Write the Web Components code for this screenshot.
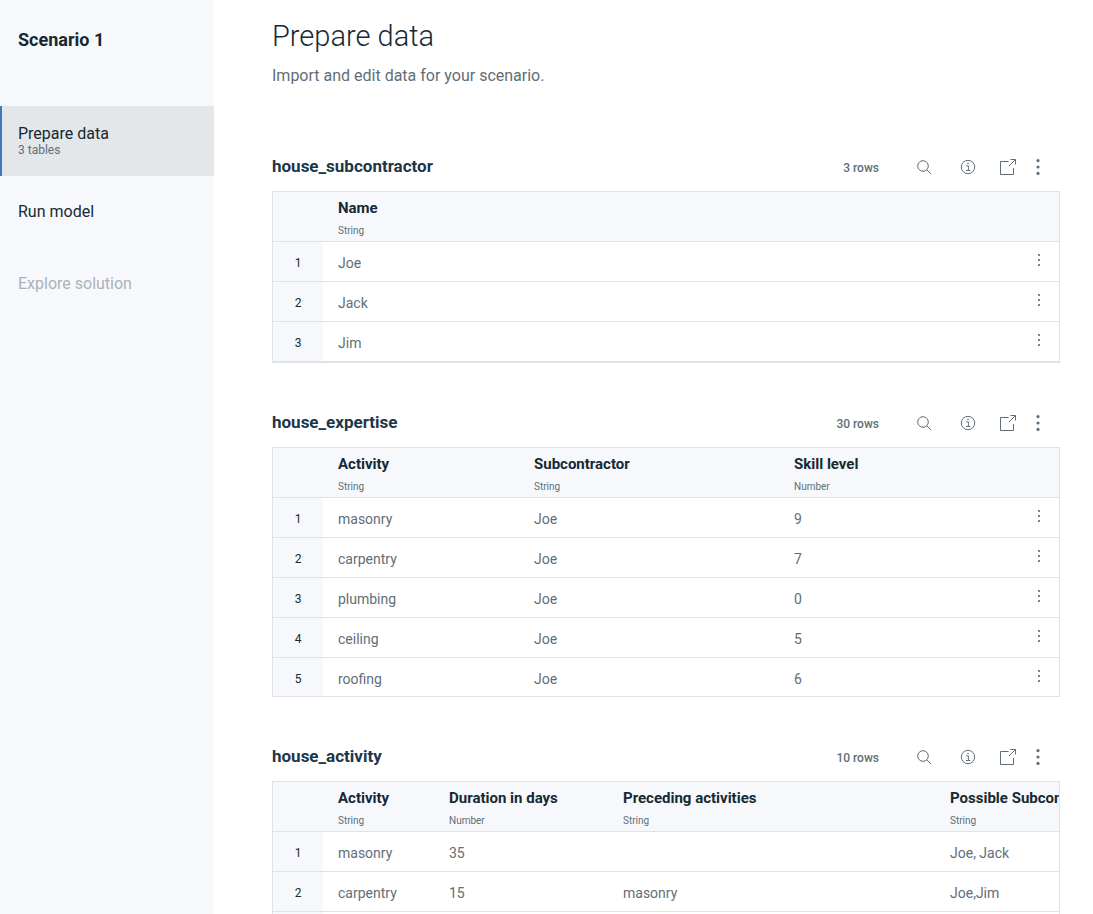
<!DOCTYPE html>
<html lang="en">
<head>
<meta charset="utf-8">
<meta name="viewport" content="width=device-width, initial-scale=1">
<title>Scenario 1 - Prepare data</title>
<style>
  html, body { margin: 0; height: 100%; }
  body {
    font-family: Roboto, "Liberation Sans", sans-serif;
    --ink: #152934; --muted: #5f6e78; --title: #1d3649;
    --line: #dfe3e6; --panel: #f7f8fc; --active: #e3e7ea; --accent: #4178be; --off: #a9b3b8;
    color: var(--ink);
  }
</style>
</head>
<body>
<scenario-app>
  <scenario-nav slot="nav" heading="Scenario 1">
    <nav-item href="#prepare" active note="3 tables">Prepare data</nav-item>
    <nav-item href="#run">Run model</nav-item>
    <nav-item href="#explore" disabled>Explore solution</nav-item>
  </scenario-nav>
  <page-header heading="Prepare data">Import and edit data for your scenario.</page-header>
  <data-table name="house_subcontractor"></data-table>
  <data-table name="house_expertise"></data-table>
  <data-table name="house_activity"></data-table>
</scenario-app>

<script>
const TABLES = {
  house_subcontractor: {
    count: 3, menu: true,
    columns: [["Name", "String"]],
    rows: [["Joe"], ["Jack"], ["Jim"]]
  },
  house_expertise: {
    count: 30, menu: true,
    columns: [["Activity", "String", 196], ["Subcontractor", "String", 260], ["Skill level", "Number"]],
    rows: [["masonry", "Joe", "9"], ["carpentry", "Joe", "7"], ["plumbing", "Joe", "0"],
           ["ceiling", "Joe", "5"], ["roofing", "Joe", "6"]]
  },
  house_activity: {
    count: 10, menu: false, width: 900,
    columns: [["Activity", "String", 111], ["Duration in days", "Number", 174],
              ["Preceding activities", "String", 327], ["Possible Subcontractors", "String"]],
    rows: [["masonry", "35", "", "Joe, Jack"], ["carpentry", "15", "masonry", "Joe,Jim"], ["", "", "", ""]]
  }
};

function mount(el, html) {
  el.attachShadow({ mode: "open" }).innerHTML = html;
}

customElements.define("scenario-app", class extends HTMLElement {
  connectedCallback() {
    mount(this, `
      <style>
        :host { display: grid; grid-template-columns: 214px minmax(0, 1fr); height: 100vh; }
        main { overflow: hidden auto; scrollbar-width: none; padding: 16px 33px 0 58px; }
      </style>
      <slot name="nav"></slot>
      <main><slot></slot></main>`);
  }
});

customElements.define("scenario-nav", class extends HTMLElement {
  connectedCallback() {
    mount(this, `
      <style>
        :host { display: block; background: var(--panel); }
        h2 { margin: 0; padding: 28px 18px 54px; font-size: 18px; line-height: 24px; font-weight: 700; }
      </style>
      <h2>${this.getAttribute("heading")}</h2>
      <nav><slot></slot></nav>`);
  }
});

customElements.define("nav-item", class extends HTMLElement {
  connectedCallback() {
    const note = this.getAttribute("note");
    const off = this.hasAttribute("disabled");
    mount(this, `
      <style>
        :host { display: block; }
        a { display: flex; flex-direction: column; justify-content: center; height: 72px;
            padding: 0 16px; border-left: 2px solid transparent; color: inherit;
            text-decoration: none; font-size: 16px; line-height: 18px; }
        small { font-size: 12px; line-height: 14px; color: var(--muted); }
        :host([active]) a { height: 70px; background: var(--active); border-color: var(--accent); }
        :host([disabled]) a { color: var(--off); }
      </style>
      <a href="${this.getAttribute("href")}" ${off ? 'aria-disabled="true"' : ""}>
        <span><slot></slot></span>${note ? `<small>${note}</small>` : ""}
      </a>`);
  }
});

customElements.define("page-header", class extends HTMLElement {
  connectedCallback() {
    mount(this, `
      <style>
        :host { display: block; margin-bottom: 59px; }
        h1 { margin: 0 0 8px; font-size: 29px; line-height: 40px; font-weight: 300; }
        p { margin: 0; font-size: 16px; line-height: 24px; color: var(--muted); }
      </style>
      <h1>${this.getAttribute("heading")}</h1>
      <p><slot></slot></p>`);
  }
});

customElements.define("tool-button", class extends HTMLElement {
  connectedCallback() {
    const icons = {
      search: `<circle cx="7" cy="7" r="5.3"/><path d="M10.8 10.8L15 15"/>`,
      info: `<circle cx="8" cy="8" r="6.7"/><path d="M6.3 6.8H8.4V11.4M5.9 11.5H10.4"/><circle cx="8" cy="4.6" r=".4"/>`,
      open: `<path d="M8.5 2.5H.5V15.5H13.5V9M10.5.5H15.5V5.5M15.5.5L9 7"/>`,
      menu: `<g fill="currentColor" stroke="none"><circle cx="8" cy="1.6" r="1.6"/><circle cx="8" cy="8" r="1.6"/><circle cx="8" cy="14.4" r="1.6"/></g>`,
      row: `<g fill="currentColor" stroke="none"><path d="M7 2h2v2H7zM7 7h2v2H7zM7 12h2v2H7z"/></g>`
    };
    mount(this, `
      <style>
        :host { display: block; width: 44px; color: var(--muted); }
        :host([narrow]) { width: 36px; }
        :host([icon="menu"]) { width: 24px; }
        :host([icon="row"]) { width: 40px; opacity: .85; }
        button { display: flex; align-items: center; justify-content: center; width: 100%;
                 height: 40px; padding: 0; border: 0; background: none; color: inherit; }
        :host([icon="row"]) button { height: 36px; }
        svg { width: 16px; height: 16px; fill: none; stroke: currentColor; overflow: visible; }
      </style>
      <button type="button" aria-label="${this.getAttribute("label")}">
        <svg viewBox="0 0 16 16" aria-hidden="true">${icons[this.getAttribute("icon")]}</svg>
      </button>`);
  }
});

customElements.define("data-table", class extends HTMLElement {
  connectedCallback() {
    const name = this.getAttribute("name");
    const t = TABLES[name];
    const cols = t.columns.map(c => `<col${c[2] ? ` style="width:${c[2]}px"` : ""}>`).join("");
    const heads = t.columns.map(c => `<th scope="col">${c[0]}<small>${c[1]}</small></th>`).join("");
    const body = t.rows.map((r, i) => `<tr><th scope="row">${r[0] ? i + 1 : ""}</th>${r.map(v => `<td>${v}</td>`).join("")}${
      t.menu ? `<td class="menu"><tool-button icon="row" label="Row ${i + 1} menu"></tool-button></td>` : ""}</tr>`).join("");
    mount(this, `
      <style>
        :host { display: block; margin-bottom: 40px; }
        header { display: flex; align-items: center; height: 40px; margin-bottom: 4px; padding-right: 10px; }
        h2 { flex: 1; margin: 0; padding-bottom: 2px; font-size: 17px; line-height: 20px; font-weight: 700; color: var(--title); }
        .count { margin-right: 23px; padding-top: 2px; font-size: 12px; line-height: 16px; font-weight: 500; color: var(--muted); }
        .frame { border: 1px solid var(--line); box-sizing: border-box; max-height: 250px;
                 overflow: auto; scrollbar-width: none; }
        table { width: 100%; min-width: ${t.width || 0}px; table-layout: fixed; border-collapse: separate; border-spacing: 0; }
        .num { width: 50px; } .act { width: 40px; }
        th, td { box-sizing: border-box; padding: 0 0 0 15px; text-align: left; font-size: 14px;
                 border-bottom: 1px solid var(--line); white-space: nowrap; }
        thead th { height: 50px; padding-top: 4px; font-size: 15px; line-height: 20px; background: var(--panel); }
        small { display: block; padding-top: 4px; font-size: 10px; line-height: 18px; font-weight: 400; color: var(--muted); }
        tbody th { padding: 2px 0 0; text-align: center; font-size: 12px; font-weight: 400; background: var(--panel); }
        td { height: 40px; padding-top: 2px; line-height: 20px; color: var(--muted); }
        td.menu { padding: 0; vertical-align: top; }
      </style>
      <header>
        <h2>${name}</h2>
        <span class="count">${t.count} rows</span>
        <tool-button icon="search" label="Search"></tool-button>
        <tool-button icon="info" label="Information"></tool-button>
        <tool-button icon="open" label="Open table" narrow></tool-button>
        <tool-button icon="menu" label="Table menu"></tool-button>
      </header>
      <div class="frame"><table>
        <colgroup><col class="num">${cols}${t.menu ? '<col class="act">' : ""}</colgroup>
        <thead><tr><th></th>${heads}${t.menu ? "<th></th>" : ""}</tr></thead>
        <tbody>${body}</tbody>
      </table></div>`);
  }
});
</script>
</body>
</html>
